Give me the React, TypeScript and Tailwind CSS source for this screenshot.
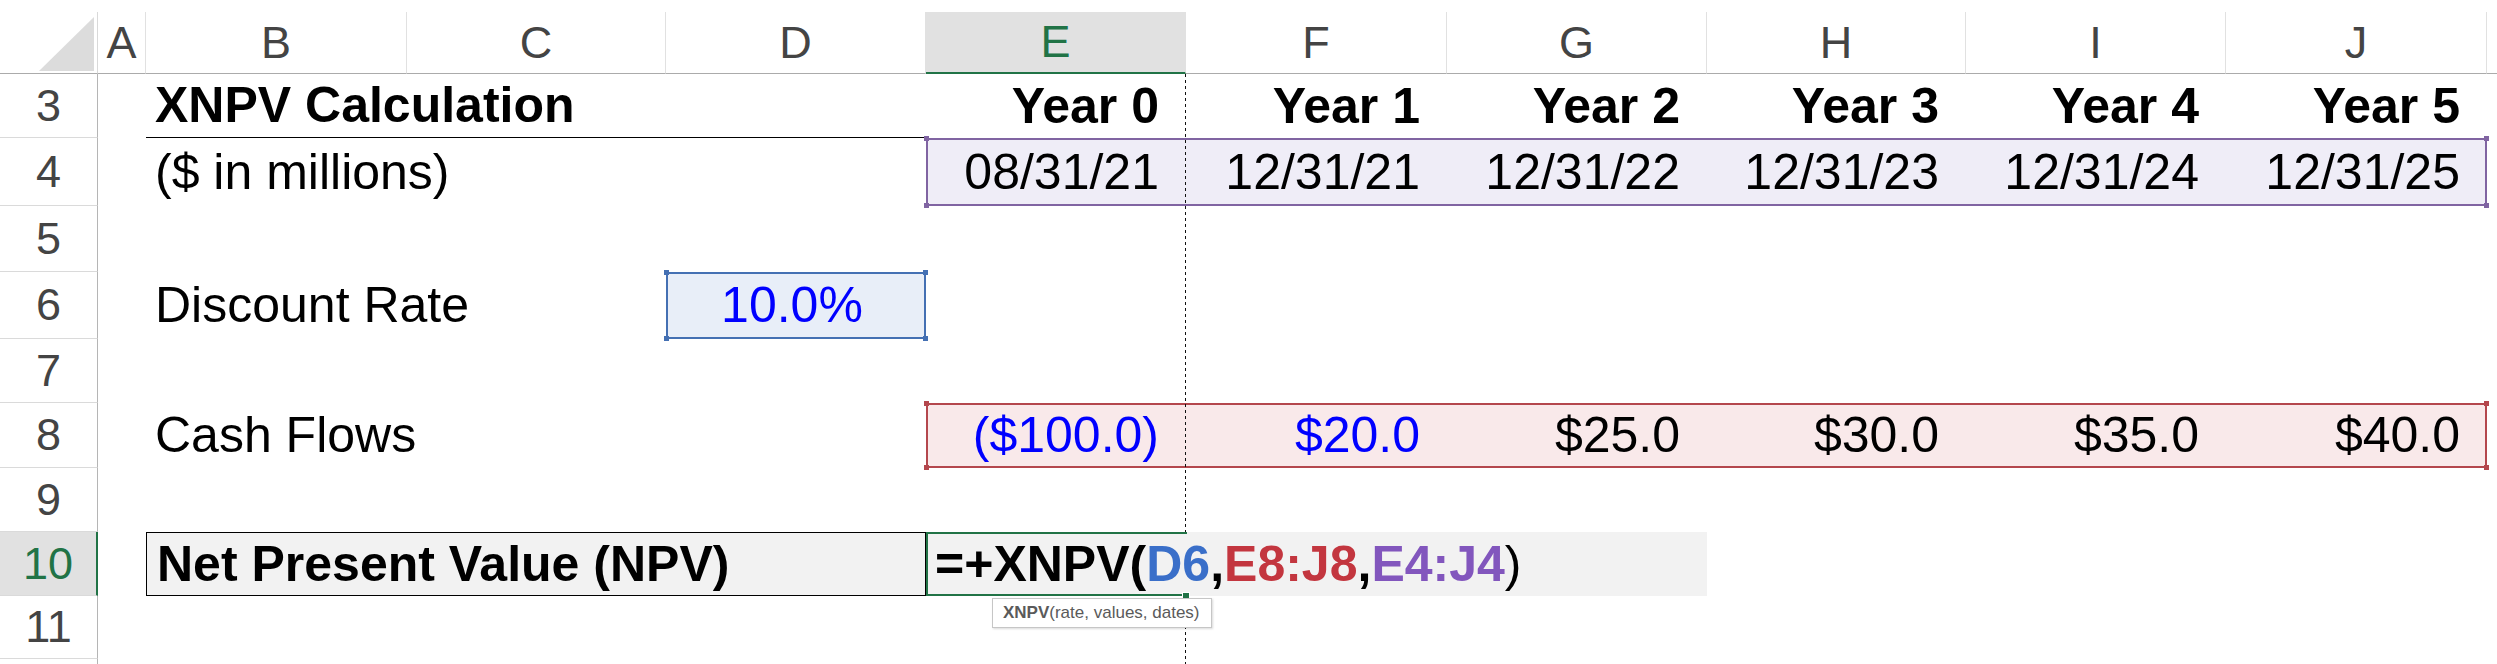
import React from 'react';

const COLS = [
  { k: 'A', w: 'w-[48px]' },
  { k: 'B', w: 'w-[261px]' },
  { k: 'C', w: 'w-[259px]' },
  { k: 'D', w: 'w-[260px]' },
  { k: 'E', w: 'w-[260px]' },
  { k: 'F', w: 'w-[261px]' },
  { k: 'G', w: 'w-[260px]' },
  { k: 'H', w: 'w-[259px]' },
  { k: 'I', w: 'w-[260px]' },
  { k: 'J', w: 'w-[261px]' },
];

const RANGE_COLS = COLS.slice(4);

const years = ['Year 0', 'Year 1', 'Year 2', 'Year 3', 'Year 4', 'Year 5'];
const dates = ['08/31/21', '12/31/21', '12/31/22', '12/31/23', '12/31/24', '12/31/25'];
const flows = [
  { v: '($100.0)', input: true },
  { v: '$20.0', input: true },
  { v: '$25.0' },
  { v: '$30.0' },
  { v: '$35.0' },
  { v: '$40.0' },
];

function RowHead({ n, active }: { n?: number; active?: boolean }) {
  return (
    <div
      className={`w-[98px] shrink-0 flex items-center justify-center border-b border-b-[#dadada] text-[45px] font-normal ${
        active
          ? 'bg-[#e1e1e1] text-[#217346] border-r-2 border-r-[#217346]'
          : 'text-[#444] border-r border-r-[#b5b5b5]'
      }`}
    >
      {n}
    </div>
  );
}

function Handles({ color }: { color: string }) {
  return (
    <>
      <span className={`absolute -left-[2px] -top-[2px] w-[5px] h-[5px] ${color}`} />
      <span className={`absolute -right-[2px] -top-[2px] w-[5px] h-[5px] ${color}`} />
      <span className={`absolute -left-[2px] -bottom-[2px] w-[5px] h-[5px] ${color}`} />
      <span className={`absolute -right-[2px] -bottom-[2px] w-[5px] h-[5px] ${color}`} />
    </>
  );
}

export default function App() {
  return (
    <div className="relative w-[2497px] h-[664px] overflow-hidden bg-white text-black font-['Liberation_Sans',Arial,sans-serif]">
      {/* column headers */}
      <div className="flex h-[62px] mt-[12px]">
        <div className="relative w-[98px] shrink-0 border-r border-b border-r-[#d9d9d9] border-b-[#ababab]">
          <svg className="absolute right-[3px] bottom-[2px]" width="55" height="54" viewBox="0 0 55 54">
            <polygon points="55,0 55,54 0,54" fill="#dcdcdc" />
          </svg>
        </div>
        {COLS.map((c) => (
          <div
            key={c.k}
            className={`${c.w} shrink-0 flex items-center justify-center border-r border-r-[#e1e1e1] text-[45px] ${
              c.k === 'E'
                ? 'bg-[#e1e1e1] text-[#217346] border-b-2 border-b-[#217346]'
                : 'text-[#444] border-b border-b-[#ababab]'
            }`}
          >
            {c.k}
          </div>
        ))}
        <div className="flex-1 border-b border-b-[#ababab]" />
      </div>

      {/* row 3 */}
      <div className="flex h-[64px] text-[50px]">
        <RowHead n={3} />
        <div className="w-[48px] shrink-0" />
        <div className="w-[261px] shrink-0 flex items-center pl-[9px] font-bold whitespace-nowrap border-b border-black">
          XNPV Calculation
        </div>
        <div className="w-[259px] shrink-0 border-b border-black" />
        <div className="w-[260px] shrink-0 border-b border-black" />
        {RANGE_COLS.map((c, i) => (
          <div key={c.k} className={`${c.w} shrink-0 flex items-center justify-end pr-[27px] font-bold whitespace-nowrap`}>
            {years[i]}
          </div>
        ))}
      </div>

      {/* row 4 */}
      <div className="flex h-[68px] text-[50px]">
        <RowHead n={4} />
        <div className="w-[48px] shrink-0" />
        <div className="w-[261px] shrink-0 flex items-center pl-[9px] whitespace-nowrap">($ in millions)</div>
        <div className="w-[259px] shrink-0" />
        <div className="w-[260px] shrink-0" />
        <div className="relative flex bg-[#efedf7]">
          {RANGE_COLS.map((c, i) => (
            <div key={c.k} className={`${c.w} shrink-0 flex items-center justify-end pr-[27px] whitespace-nowrap`}>
              {dates[i]}
            </div>
          ))}
          <div className="absolute inset-0 border-2 border-[#8064a2]" />
          <Handles color="bg-[#8064a2]" />
        </div>
      </div>

      {/* row 5 */}
      <div className="flex h-[66px]">
        <RowHead n={5} />
      </div>

      {/* row 6 */}
      <div className="flex h-[67px] text-[50px]">
        <RowHead n={6} />
        <div className="w-[48px] shrink-0" />
        <div className="w-[261px] shrink-0 flex items-center pl-[9px] whitespace-nowrap">Discount Rate</div>
        <div className="w-[259px] shrink-0" />
        <div className="relative w-[260px] shrink-0 flex items-center justify-center pr-[8px] bg-[#e8eef8] text-[#0000ff]">
          10.0%
          <div className="absolute inset-0 border-2 border-[#4470b3]" />
          <Handles color="bg-[#4470b3]" />
        </div>
      </div>

      {/* row 7 */}
      <div className="flex h-[64px]">
        <RowHead n={7} />
      </div>

      {/* row 8 */}
      <div className="flex h-[65px] text-[50px]">
        <RowHead n={8} />
        <div className="w-[48px] shrink-0" />
        <div className="w-[261px] shrink-0 flex items-center pl-[9px] whitespace-nowrap">Cash Flows</div>
        <div className="w-[259px] shrink-0" />
        <div className="w-[260px] shrink-0" />
        <div className="relative flex bg-[#f9e9ea]">
          {RANGE_COLS.map((c, i) => (
            <div
              key={c.k}
              className={`${c.w} shrink-0 flex items-center justify-end pr-[27px] whitespace-nowrap ${
                flows[i].input ? 'text-[#0000ff]' : ''
              }`}
            >
              {flows[i].v}
            </div>
          ))}
          <div className="absolute inset-0 border-2 border-[#b4474d]" />
          <Handles color="bg-[#b4474d]" />
        </div>
      </div>

      {/* row 9 */}
      <div className="flex h-[64px]">
        <RowHead n={9} />
      </div>

      {/* row 10 */}
      <div className="flex h-[64px] text-[50px] font-bold">
        <RowHead n={10} active />
        <div className="w-[48px] shrink-0" />
        <div className="w-[780px] shrink-0 flex items-center pl-[10px] border border-black bg-[#f2f2f2] whitespace-nowrap">
          Net Present Value (NPV)
        </div>
        <div className="relative z-10 w-[781px] shrink-0 flex items-center pl-[9px] bg-[#f2f2f2] whitespace-nowrap">
          <span>=+XNPV(</span>
          <span className="text-[#3a6fc9]">D6</span>
          <span>,</span>
          <span className="text-[#c3363f]">E8:J8</span>
          <span>,</span>
          <span className="text-[#8256bd]">E4:J4</span>
          <span className="font-normal">)</span>
          <div className="absolute left-0 top-0 bottom-0 w-[261px] border-2 border-r-0 border-[#217346]" />
          <span className="absolute left-[257px] -bottom-[3px] w-[6px] h-[6px] bg-[#217346] outline outline-1 outline-white" />
        </div>
      </div>

      {/* row 11 */}
      <div className="flex h-[63px]">
        <RowHead n={11} />
      </div>

      {/* row 12, only its top edge shows */}
      <div className="flex h-[64px]">
        <RowHead />
      </div>

      {/* page break line */}
      <div className="absolute left-[1185px] top-[74px] bottom-0 w-[1px] z-[5] bg-[repeating-linear-gradient(to_bottom,#111_0px,#111_3px,transparent_3px,transparent_6px)]" />

      {/* function tooltip */}
      <div className="absolute left-[992px] top-[598px] z-20 w-[220px] h-[30px] flex items-center pl-[10px] bg-white border border-[#c6c6c6] shadow-[1px_1px_2px_rgba(0,0,0,0.15)] text-[17px] text-[#5a5a5a] whitespace-nowrap">
        <span className="font-bold">XNPV</span>
        <span>(rate, values, dates)</span>
      </div>
    </div>
  );
}
